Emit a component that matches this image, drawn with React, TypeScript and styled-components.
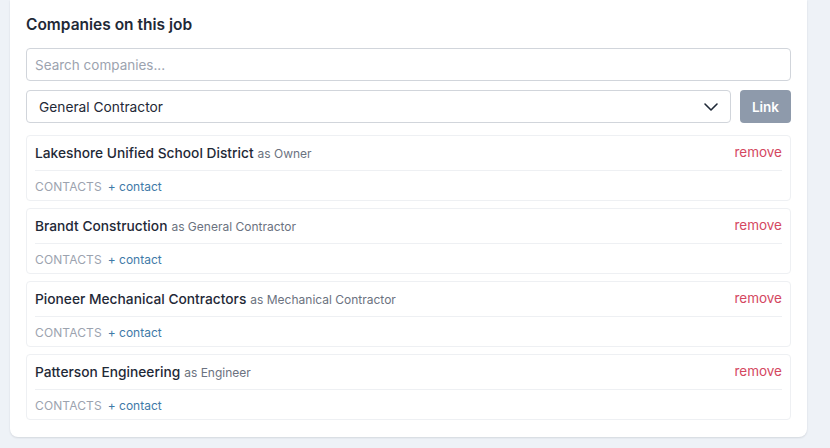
import styled, { createGlobalStyle } from "styled-components";

const GlobalStyle = createGlobalStyle`
  html, body {
    margin: 0;
    padding: 0;
    background: #eef2f7;
  }
  body {
    font-family: Inter, "Noto Sans", "Liberation Sans", sans-serif;
    color: #1f2937;
  }
  * {
    box-sizing: border-box;
  }
`;

const Page = styled.div`
  padding: 0 23px 11px 10px;
`;

const Card = styled.section`
  background: #ffffff;
  border-radius: 0 0 8px 8px;
  box-shadow: 0 1px 2px rgba(15, 23, 42, 0.12);
  padding: 15px 16px 17px 16px;
`;

const Title = styled.h2`
  margin: 0 0 13px;
  font-size: 15.5px;
  line-height: 20px;
  font-weight: 600;
  color: #1f2937;
`;

const SearchInput = styled.input`
  display: block;
  width: 100%;
  height: 33px;
  padding: 0 8px;
  border: 1px solid #d1d5db;
  border-radius: 4px;
  font-family: inherit;
  font-size: 13.5px;
  color: #1f2937;
  outline: none;

  &::placeholder {
    color: #9ca3af;
  }
`;

const LinkRow = styled.div`
  display: flex;
  gap: 9px;
  margin-top: 9px;
`;

const SelectBox = styled.div`
  flex: 1;
  height: 33px;
  display: flex;
  align-items: center;
  justify-content: space-between;
  padding: 0 9px 0 12px;
  border: 1px solid #d1d5db;
  border-radius: 4px;
  font-size: 13.75px;
  color: #1f2937;
`;

const LinkButton = styled.button`
  width: 51px;
  height: 33px;
  border: none;
  border-radius: 4px;
  background: #8e9aab;
  color: #ffffff;
  font-family: inherit;
  font-size: 13.5px;
  font-weight: 600;
`;

const List = styled.div`
  display: flex;
  flex-direction: column;
  gap: 7px;
  margin-top: 12px;
`;

const CompanyCard = styled.div`
  border: 1px solid #eef0f3;
  border-radius: 4px;
  padding: 0 8px;
`;

const CompanyHead = styled.div`
  display: flex;
  align-items: center;
  justify-content: space-between;
  height: 35px;
  padding-bottom: 3px;
  border-bottom: 1px solid #eef0f3;
`;

const CompanyName = styled.span`
  font-size: 13.75px;
  font-weight: 500;
  color: #1f2937;
`;

const Role = styled.span`
  font-size: 12px;
  font-weight: 400;
  color: #6b7280;
  margin-left: 4px;
`;

const RemoveLink = styled.span`
  font-size: 13.5px;
  color: #d4485f;
`;

const ContactsRow = styled.div`
  display: flex;
  align-items: center;
  gap: 6px;
  height: 29px;
  padding-top: 2px;
  font-size: 12px;
`;

const ContactsLabel = styled.span`
  color: #9ca3af;
  letter-spacing: 0.01em;
`;

const AddContact = styled.span`
  color: #3f7aa8;
`;

const companies = [
  { name: "Lakeshore Unified School District", role: "Owner" },
  { name: "Brandt Construction", role: "General Contractor" },
  { name: "Pioneer Mechanical Contractors", role: "Mechanical Contractor" },
  { name: "Patterson Engineering", role: "Engineer" },
];

function Chevron() {
  return (
    <svg width="20" height="20" viewBox="0 0 20 20" fill="none">
      <path d="M4 7l6 6 6-6" stroke="#1f2937" strokeWidth="1.6" strokeLinecap="round" strokeLinejoin="round" />
    </svg>
  );
}

export default function App() {
  return (
    <Page>
      <GlobalStyle />
      <Card>
        <Title>Companies on this job</Title>
        <SearchInput placeholder="Search companies..." />
        <LinkRow>
          <SelectBox>
            <span>General Contractor</span>
            <Chevron />
          </SelectBox>
          <LinkButton>Link</LinkButton>
        </LinkRow>
        <List>
          {companies.map((c) => (
            <CompanyCard key={c.name}>
              <CompanyHead>
                <span>
                  <CompanyName>{c.name}</CompanyName>
                  <Role>as {c.role}</Role>
                </span>
                <RemoveLink>remove</RemoveLink>
              </CompanyHead>
              <ContactsRow>
                <ContactsLabel>CONTACTS</ContactsLabel>
                <AddContact>+ contact</AddContact>
              </ContactsRow>
            </CompanyCard>
          ))}
        </List>
      </Card>
    </Page>
  );
}
